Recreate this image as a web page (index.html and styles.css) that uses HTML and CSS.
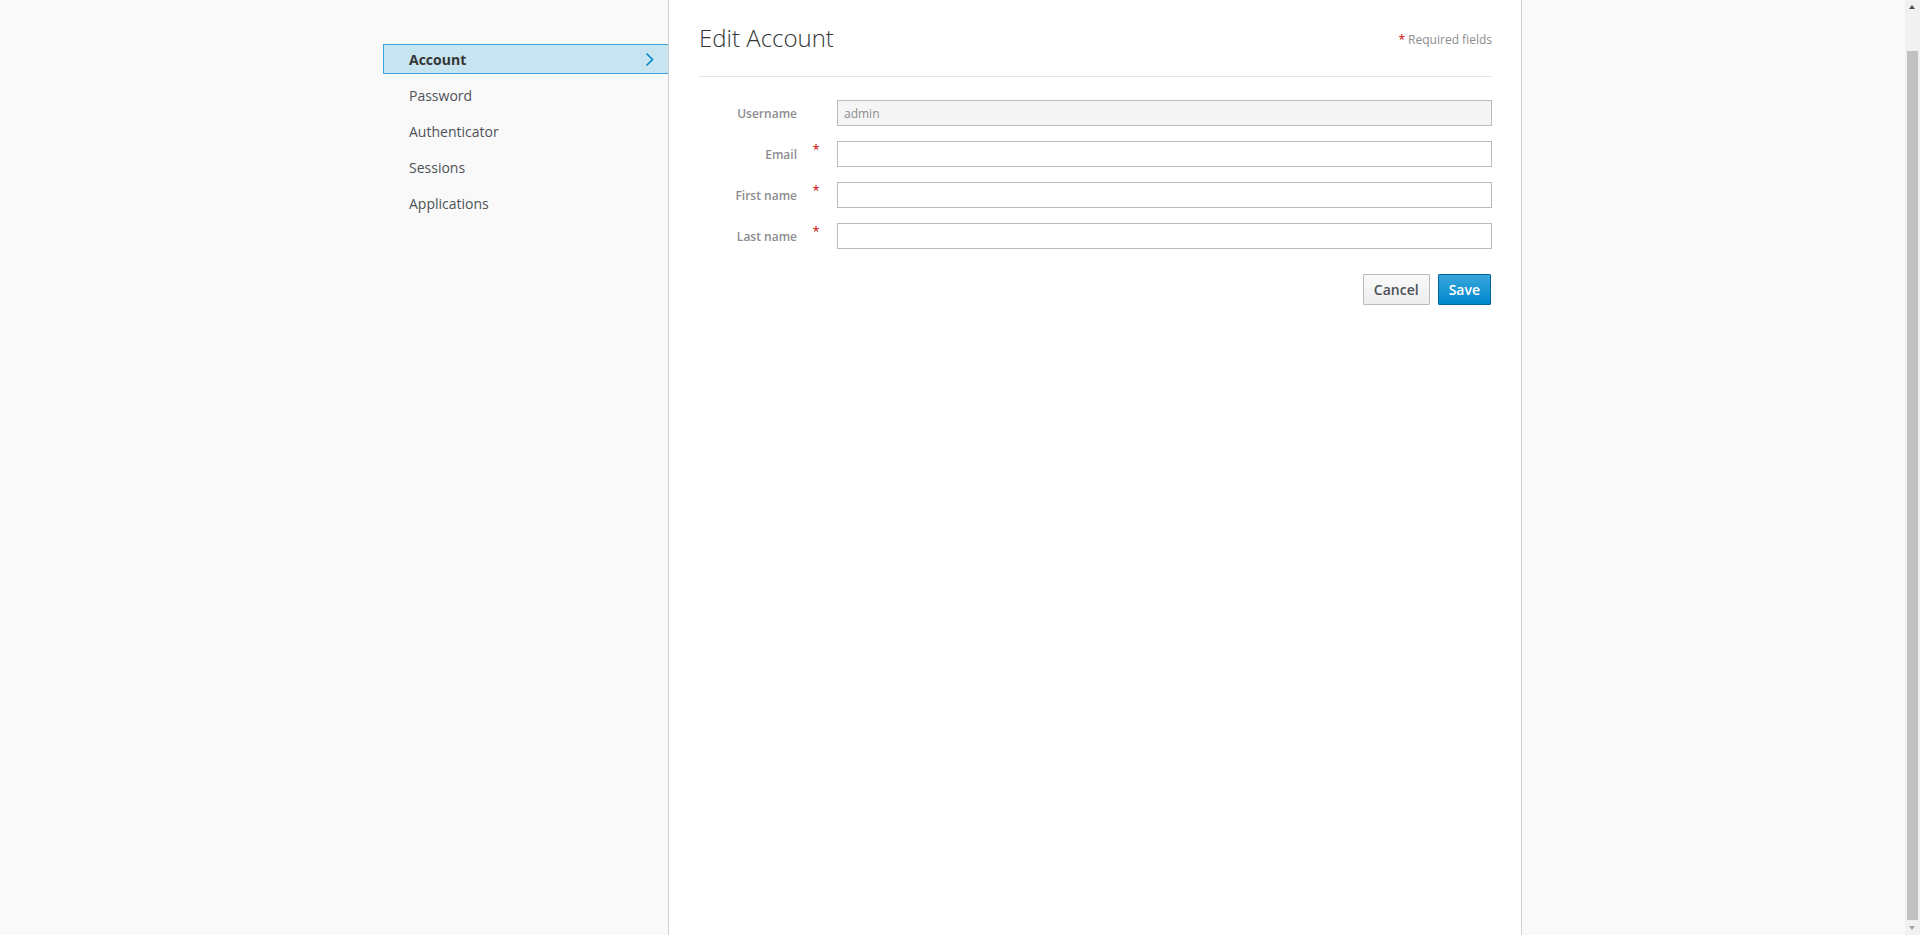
FILE: index.html
```html
<!DOCTYPE html>
<html lang="en">
<head>
<meta charset="utf-8">
<title>Keycloak Account Management</title>
<link rel="stylesheet" href="styles.css">
</head>
<body>
<div class="page">
  <nav class="sidebar">
    <ul class="nav">
      <li class="nav-item active"><span>Account</span>
        <svg class="chev" width="9" height="15" viewBox="0 0 9 15"><path d="M1.5 1.5 L7.5 7.5 L1.5 13.5" fill="none" stroke="#0088ce" stroke-width="1.6"/></svg>
      </li>
      <li class="nav-item"><span>Password</span></li>
      <li class="nav-item"><span>Authenticator</span></li>
      <li class="nav-item"><span>Sessions</span></li>
      <li class="nav-item"><span>Applications</span></li>
    </ul>
  </nav>
  <main class="panel">
    <div class="panel-head">
      <h2 class="title">Edit Account</h2>
      <div class="subtitle"><span class="req">*</span> Required fields</div>
    </div>
    <form class="form">
      <div class="row">
        <label class="label">Username</label>
        <span class="mark"></span>
        <input class="input disabled" type="text" value="admin" disabled>
      </div>
      <div class="row">
        <label class="label">Email</label>
        <span class="mark">*</span>
        <input class="input" type="text">
      </div>
      <div class="row">
        <label class="label">First name</label>
        <span class="mark">*</span>
        <input class="input" type="text">
      </div>
      <div class="row">
        <label class="label">Last name</label>
        <span class="mark">*</span>
        <input class="input" type="text">
      </div>
      <div class="actions">
        <button type="button" class="btn btn-default">Cancel</button>
        <button type="button" class="btn btn-primary">Save</button>
      </div>
    </form>
  </main>
</div>
<div class="scrollbar" aria-hidden="true">
  <div class="sb-up"></div>
  <div class="sb-thumb"></div>
  <div class="sb-down"></div>
</div>
<script src="script.js"></script>
</body>
</html>
```

FILE: styles.css
```css
html, body {
  margin: 0;
  padding: 0;
}
body {
  background: #f9f9f9;
  font-family: "Open Sans", "Liberation Sans", sans-serif;
  color: #363636;
  padding-right: 15px;
}
.page {
  width: 1139px;
  margin: 0 auto;
  display: flex;
  min-height: calc(100vh + 39px);
}
.sidebar {
  width: 285px;
  flex: none;
  padding-top: 83px;
}
.nav {
  list-style: none;
  margin: 0;
  padding: 0;
  display: flex;
  flex-direction: column;
  gap: 6px;
}
.nav-item {
  height: 30px;
  box-sizing: border-box;
  display: flex;
  align-items: center;
  justify-content: space-between;
  padding: 0 14px 0 26px;
  font-size: 14px;
  color: #4d5258;
}
.nav-item.active {
  background: #c7e5f1;
  border: 1px solid #39a5dc;
  border-right: none;
  padding-left: 25px;
  font-weight: 700;
  color: #363636;
}
.chev {
  display: block;
}
.panel {
  flex: 1;
  background: #fff;
  border-left: 1px solid #d1d1d1;
  border-right: 1px solid #d1d1d1;
  padding: 39px 29px 0 30px;
}
.panel-head {
  height: 77px;
  display: flex;
  align-items: center;
  justify-content: space-between;
  border-bottom: 1px solid #e3e3e3;
  box-sizing: border-box;
}
.title {
  margin: 0;
  font-size: 24px;
  font-weight: 300;
  color: #363636;
  line-height: 32px;
}
.subtitle {
  font-size: 12px;
  color: #8b8d8f;
  margin-top: 3px;
}
.req {
  color: #cc0000;
}
.form {
  margin-top: 23px;
  display: flex;
  flex-direction: column;
  gap: 15px;
}
.row {
  display: grid;
  grid-template-columns: 98px 40px 1fr;
  align-items: center;
  height: 26px;
}
.label {
  text-align: right;
  font-size: 12px;
  font-weight: 600;
  color: #8b8d8f;
}
.mark {
  color: #cc0000;
  font-size: 13px;
  text-align: center;
  align-self: start;
  margin-top: -1px;
  padding-right: 2px;
}
.input {
  box-sizing: border-box;
  height: 26px;
  width: 655px;
  border: 1px solid #bbb;
  background: #fff;
  font-family: "Open Sans", "Liberation Sans", sans-serif;
  font-size: 12px;
  padding: 2px 6px;
  margin: 0;
  color: #363636;
}
.input.disabled {
  background: #f5f5f5;
  color: #8b8d8f;
}
.actions {
  margin-top: 10px;
  display: flex;
  justify-content: flex-end;
  gap: 8px;
  padding-right: 1px;
}
.btn {
  height: 31px;
  box-sizing: border-box;
  padding: 0 10px;
  font-family: "Open Sans", "Liberation Sans", sans-serif;
  font-size: 14px;
  font-weight: 600;
  border-radius: 1px;
  cursor: pointer;
}
.btn-default {
  background: linear-gradient(#fafafa, #ededed);
  border: 1px solid #bbb;
  color: #4d5258;
}
.btn-primary {
  background: linear-gradient(#39a5dc, #0088ce);
  border: 1px solid #00659c;
  color: #fff;
}
.scrollbar {
  position: fixed;
  top: 0;
  right: 0;
  width: 15px;
  height: 100vh;
  background: #f1f1f1;
}
.sb-up {
  position: absolute;
  top: 5px;
  left: 4px;
  width: 0;
  height: 0;
  border-left: 3.5px solid transparent;
  border-right: 3.5px solid transparent;
  border-bottom: 4px solid #505050;
}
.sb-thumb {
  position: absolute;
  top: 51px;
  bottom: 15px;
  left: 2px;
  width: 11px;
  background: #c1c1c1;
}
.sb-down {
  position: absolute;
  bottom: 5px;
  left: 4px;
  width: 0;
  height: 0;
  border-left: 3.5px solid transparent;
  border-right: 3.5px solid transparent;
  border-top: 4px solid #a3a3a3;
}
```

FILE: script.js
```js
window.scrollTo(0, 39);
```
